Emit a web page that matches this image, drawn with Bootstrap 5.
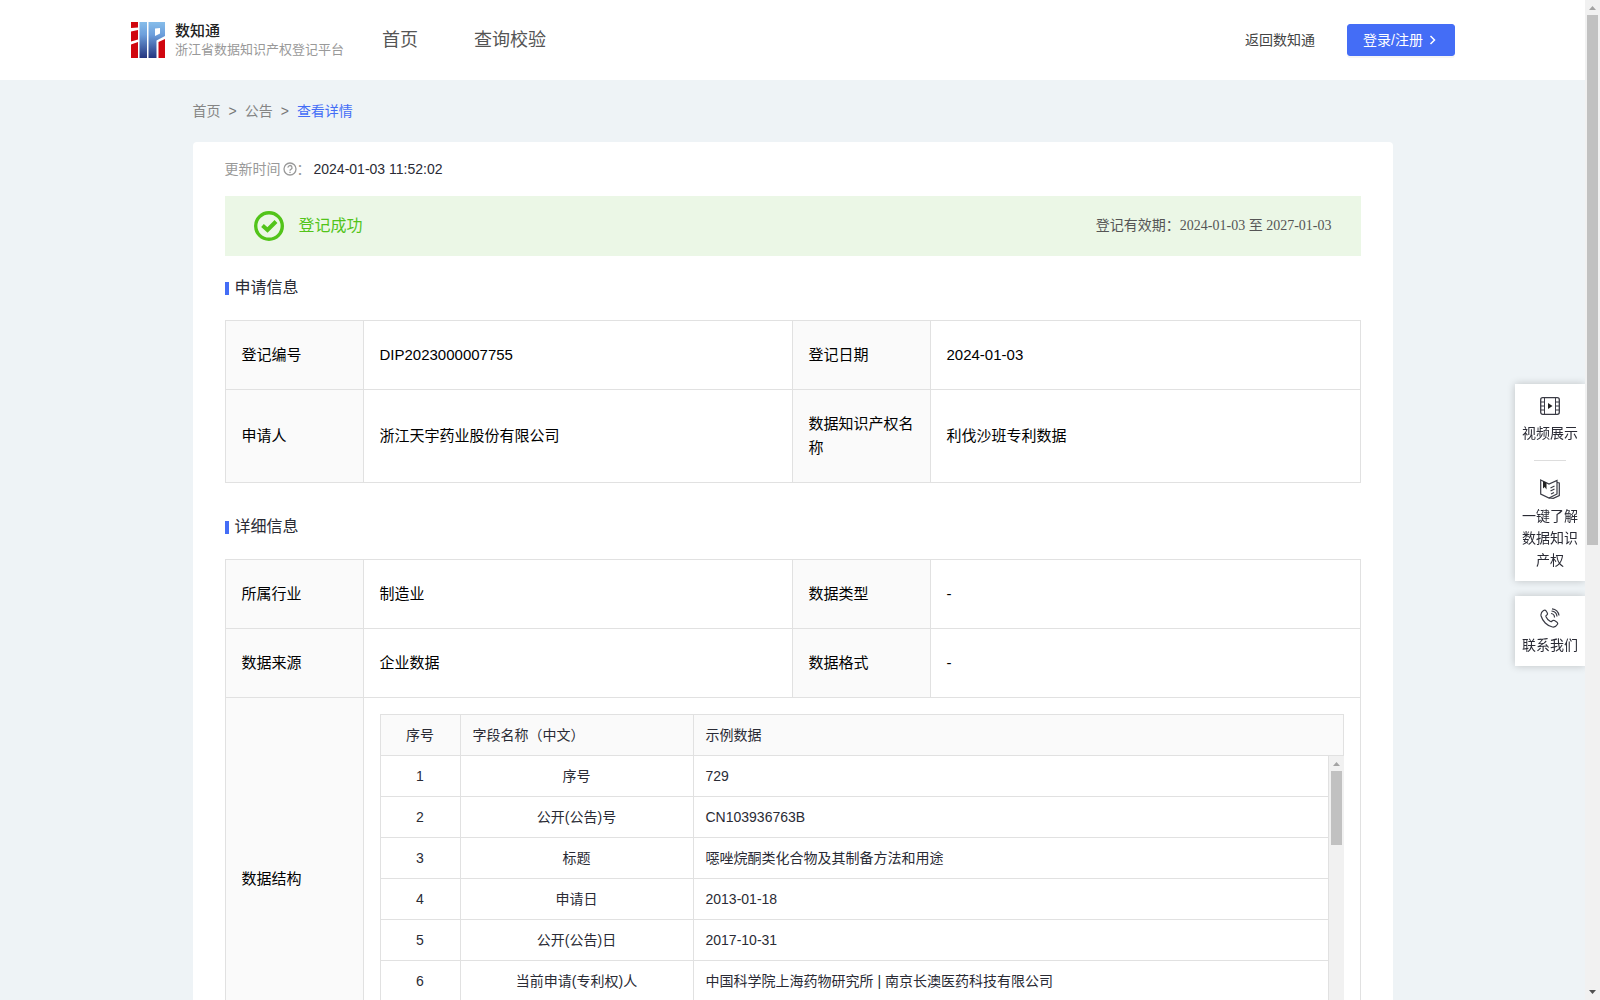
<!DOCTYPE html>
<html lang="zh-CN">
<head>
<meta charset="utf-8">
<meta name="viewport" content="width=device-width, initial-scale=1">
<title>查看详情</title>
<link rel="stylesheet" href="https://cdn.jsdelivr.net/npm/bootstrap@5.3.0/dist/css/bootstrap.min.css">
<style>
body{font-family:"Liberation Sans","Noto Sans CJK SC",sans-serif;font-size:14px;line-height:20px;color:#2a2b35;background:#eef3f6}
a{color:inherit;text-decoration:none}
.viewport-pane{min-width:0}
.site-head{height:80px}
.head-inner{width:100%;max-width:1325px}
.brand-link{gap:9px}
.brand-name{font-size:15px;font-weight:500;color:#222}
.brand-sub{font-size:13px;line-height:18px;color:#999}
.main-nav{gap:56px;font-size:18px;color:#555;margin-left:38px}
.back-link{color:#444}
.login-btn{--bs-btn-bg:#446df6;--bs-btn-border-color:#446df6;--bs-btn-color:#fff;--bs-btn-font-size:14px;--bs-btn-line-height:20px;--bs-btn-padding-y:5px;--bs-btn-padding-x:15px;--bs-btn-border-radius:3px;width:108px;gap:6px;box-shadow:0 2px 0 rgba(0,0,0,.04)}
.page-main{width:100%;max-width:1200px}
.crumbs{height:62px;color:#858585;--bs-breadcrumb-divider:'>'}
.crumbs .breadcrumb-item.active{color:#446df6}
.crumbs .breadcrumb-item+.breadcrumb-item::before{color:#777}
.detail-card{border-radius:4px;padding:0 32px 32px}
.stamp-row{height:54px;gap:3px}
.stamp-label{color:#999}
.stamp-label svg{margin-left:2px}
.ok-banner{height:60px;background:#ebf7e6;padding:0 29px}
.ok-text{font-size:16px;color:#52c41a;margin-left:15px}
.valid-text{font-family:"Liberation Serif","Noto Sans CJK SC",serif;color:#555}
.section-head{height:64px;font-size:16px;margin:0;line-height:24px;font-weight:400}
.section-head::before{content:"";width:4px;height:13px;background:#446df6;margin-right:6px}
.info-grid+.section-head{margin-top:12px}
.info-grid{width:100%;table-layout:fixed;border-collapse:separate;border-spacing:0;border:solid #e1e1e1;border-width:1px 0 0 1px;font-size:15px;line-height:24px;color:#000}
.info-grid>tbody>tr>*{border:solid #e1e1e1;border-width:0 1px 1px 0;padding:22px 15px 22px 16px;font-weight:400;vertical-align:middle;text-align:left}
.info-grid>tbody>tr>th{background:#fafafa}
.info-grid>tbody>tr>td.nest-cell{padding:16px}
.key-col{width:138px}.val-col{width:429px}
.field-box{border:solid #e1e1e1;border-width:1px 0 0 1px;font-size:14px;line-height:20px;color:#2a2b35}
.field-grid{width:100%;table-layout:fixed;border-collapse:separate;border-spacing:0}
.field-grid th,.field-grid td{border:solid #e1e1e1;border-width:0 1px 1px 0;padding:10px 12px;font-weight:400}
.field-grid th{background:#fafafa}
.no-col{width:80px}.name-col{width:233px}
.field-body{height:288px;overflow:hidden}
.sbar{width:15px;flex:none;background:#f1f1f1;padding:0 2px}
.sbar svg{display:block;margin:0 auto;height:15px;width:11px;flex:none}
.sbar-thumb{background:#c1c1c1;width:11px}
.thumb-page{height:53%}
.thumb-list{height:74px}
.side-dock{right:15px;top:384px;width:70px;gap:15px}
.dock-card{background:#fff;box-shadow:0 0 8px rgba(0,0,0,.2);padding:12px 0 10px;clip-path:inset(-12px 0 -12px -12px);line-height:22px}
.dock-item{gap:6px;padding:0 7px}
.dock-card hr{width:32px;margin:16px auto 18px;color:#ddd;opacity:1}
</style>
<script src="https://cdn.jsdelivr.net/npm/bootstrap@5.3.0/dist/js/bootstrap.bundle.min.js"></script>
</head>
<body>
<div class="d-flex vh-100 overflow-hidden">
<div class="viewport-pane flex-grow-1 overflow-hidden">
<header class="site-head bg-white d-flex">
 <div class="head-inner mx-auto d-flex align-items-center">
  <a href="#" class="brand-link d-flex align-items-center">
   <svg width="36" height="38" viewBox="0 0 36 38" aria-hidden="true">
    <defs><linearGradient id="lg" x1="0" y1="0" x2="0" y2="1"><stop offset="0" stop-color="#86bdea"/><stop offset=".35" stop-color="#6d9fdc"/><stop offset="1" stop-color="#24357f"/></linearGradient></defs>
    <path fill="#d0060f" d="M1 1h7v5.500l-7 .5zM1 10.500L8 9v9.500l-7 2zM1 23.500L8 21v16H1zM28.500 21l6.500-3v19h-6.500z"/>
    <path fill="url(#lg)" fill-rule="evenodd" d="M9.500 1H17v36H9.500zM18.500 1H35v14l-8.500 4.500V37h-8zM25 7.500V15l5-2.500V7z"/>
   </svg>
   <span class="d-flex flex-column"><span class="brand-name">数知通</span><span class="brand-sub">浙江省数据知识产权登记平台</span></span>
  </a>
  <nav class="main-nav d-flex"><a href="#">首页</a><a href="#">查询校验</a></nav>
  <a href="#" class="back-link ms-auto me-3 pe-3">返回数知通</a>
  <button type="button" class="btn login-btn d-flex align-items-center text-nowrap">登录/注册<svg width="7" height="10" viewBox="0 0 7 10" fill="none" stroke="#fff" stroke-width="1.500" aria-hidden="true"><path d="M1.500 1l4 4-4 4"/></svg></button>
 </div>
</header>
<main class="page-main mx-auto">
 <nav aria-label="breadcrumb"><ol class="crumbs breadcrumb m-0 align-items-center"><li class="breadcrumb-item"><a href="#">首页</a></li><li class="breadcrumb-item"><a href="#">公告</a></li><li class="breadcrumb-item active" aria-current="page">查看详情</li></ol></nav>
 <div class="detail-card bg-white">
  <div class="stamp-row d-flex align-items-center">
   <span class="stamp-label d-flex align-items-center">更新时间<svg width="14" height="14" viewBox="0 0 14 14" fill="none" stroke="#999" stroke-width="1.300" aria-hidden="true"><circle cx="7" cy="7" r="6"/><path d="M5 5.600a2 2 0 1 1 2.900 1.700Q7 7.700 7 8.700M7 9.700v1.200"/></svg>：</span><span>2024-01-03 11:52:02</span>
  </div>
  <div class="ok-banner d-flex align-items-center">
   <svg width="30" height="30" viewBox="0 0 30 30" fill="none" stroke="#52c41a" aria-hidden="true"><circle cx="15" cy="15" r="13.300" stroke-width="3.400"/><path d="M8.500 14.500l5 4.500 8.500-8.500" stroke-width="4"/></svg>
   <span class="ok-text">登记成功</span>
   <span class="valid-text ms-auto">登记有效期：2024-01-03 至 2027-01-03</span>
  </div>
  <h2 class="section-head d-flex align-items-center">申请信息</h2>
  <table class="info-grid">
   <colgroup><col class="key-col"><col class="val-col"><col class="key-col"><col></colgroup>
   <tbody>
    <tr><th scope="row">登记编号</th><td>DIP2023000007755</td><th scope="row">登记日期</th><td>2024-01-03</td></tr>
    <tr><th scope="row">申请人</th><td>浙江天宇药业股份有限公司</td><th scope="row">数据知识产权名称</th><td>利伐沙班专利数据</td></tr>
   </tbody>
  </table>
  <h2 class="section-head d-flex align-items-center">详细信息</h2>
  <table class="info-grid">
   <colgroup><col class="key-col"><col class="val-col"><col class="key-col"><col></colgroup>
   <tbody>
    <tr><th scope="row">所属行业</th><td>制造业</td><th scope="row">数据类型</th><td>-</td></tr>
    <tr><th scope="row">数据来源</th><td>企业数据</td><th scope="row">数据格式</th><td>-</td></tr>
    <tr><th scope="row">数据结构</th><td colspan="3" class="nest-cell">
     <div class="field-box">
      <table class="field-grid">
       <colgroup><col class="no-col"><col class="name-col"><col></colgroup>
       <thead><tr><th class="text-center">序号</th><th>字段名称（中文）</th><th>示例数据</th></tr></thead>
      </table>
      <div class="field-body d-flex">
       <div class="flex-grow-1">
        <table class="field-grid">
         <colgroup><col class="no-col"><col class="name-col"><col></colgroup>
         <tbody>
          <tr><td class="text-center">1</td><td class="text-center">序号</td><td>729</td></tr>
          <tr><td class="text-center">2</td><td class="text-center">公开(公告)号</td><td>CN103936763B</td></tr>
          <tr><td class="text-center">3</td><td class="text-center">标题</td><td>噁唑烷酮类化合物及其制备方法和用途</td></tr>
          <tr><td class="text-center">4</td><td class="text-center">申请日</td><td>2013-01-18</td></tr>
          <tr><td class="text-center">5</td><td class="text-center">公开(公告)日</td><td>2017-10-31</td></tr>
          <tr><td class="text-center">6</td><td class="text-center">当前申请(专利权)人</td><td>中国科学院上海药物研究所 | 南京长澳医药科技有限公司</td></tr>
         </tbody>
        </table>
       </div>
       <div class="sbar" aria-hidden="true"><svg viewBox="0 0 11 15"><path fill="#a3a3a3" d="M2 10h7L5.500 6z"/></svg><div class="sbar-thumb thumb-list"></div></div>
      </div>
     </div>
    </td></tr>
   </tbody>
  </table>
 </div>
</main>
</div>
<div class="sbar d-flex flex-column" aria-hidden="true"><svg viewBox="0 0 11 15"><path fill="#a3a3a3" d="M2 10h7L5.500 6z"/></svg><div class="sbar-thumb thumb-page"></div><svg class="mt-auto" viewBox="0 0 11 15"><path fill="#505050" d="M2 5h7L5.500 9z"/></svg></div>
</div>
<aside class="side-dock position-fixed d-flex flex-column text-center">
 <div class="dock-card">
  <a href="#" class="dock-item d-flex flex-column align-items-center">
   <svg width="20" height="20" viewBox="0 0 20 20" fill="none" stroke="#3a3b45" aria-hidden="true"><rect x=".7" y="1.700" width="18.600" height="16.600" rx="2" stroke-width="1.300"/><path d="M4.500 2v16M15.500 2v16M1 6h3.500M1 10h3.500M1 14h3.500M15.500 6H19M15.500 10H19M15.500 14H19"/><path d="M8 7l4.500 3L8 13z" fill="#222" stroke="none"/></svg>
   <span>视频展示</span></a>
  <hr>
  <a href="#" class="dock-item d-flex flex-column align-items-center">
   <svg width="20" height="20" viewBox="0 0 20 20" fill="none" stroke="#3a3b45" stroke-width="1.200" aria-hidden="true"><path d="M.7 1l8.300 4 8-3.500v13.500L9 19 .7 15z"/><path d="M17 3.500l2.300.5v12.500l-6 2.800-4.300-.3"/><path d="M10.500 9l4-2M10.500 12l4-2M11 15l3-1.500"/><path d="M3 2v7.500l1.700-1.500L6.500 10.500V3.700z" fill="#222" stroke="none"/></svg>
   <span>一键了解数据知识产权</span></a>
 </div>
 <div class="dock-card">
  <a href="#" class="dock-item d-flex flex-column align-items-center">
   <svg width="20" height="20" viewBox="0 0 20 20" fill="none" stroke="#3a3b45" stroke-width="1.200" aria-hidden="true"><path d="M3.500 2.500c-2 1.300-3 3-2.400 5.500C2.500 13 7 18 12.500 19c2.500.4 4-.9 5-2.700.5-1-.1-1.800-.8-2.300l-2.200-1.400c-.9-.5-1.800-.4-2.400.4-.6.7-1.200.9-2 .3C8 12 6.700 10.500 6 8.800c-.3-.8 0-1.300.8-1.800.8-.6.9-1.400.4-2.300L6 2.800C5.400 1.900 4.500 1.900 3.500 2.500z"/><path d="M11 5.500a4 4 0 0 1 3.500 4M11.500 3a6 6 0 0 1 5.500 5.500M12 .8A8 8 0 0 1 19 7.500"/></svg>
   <span>联系我们</span></a>
 </div>
</aside>
</body>
</html>
